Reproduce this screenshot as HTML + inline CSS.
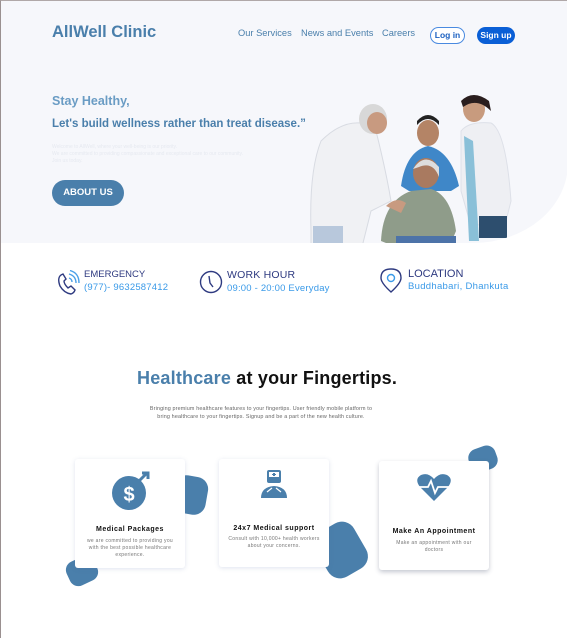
<!DOCTYPE html>
<html><head><meta charset="utf-8"><style>
*{margin:0;padding:0;box-sizing:border-box}
body{width:567px;height:638px;overflow:hidden;background:#fff;font-family:"Liberation Sans",sans-serif;position:relative;border-left:1px solid #9a9090;border-top:1px solid #b0a8a8}
.hero{position:absolute;left:0;top:0;width:567px;height:242px;background:#f6f7fb;border-bottom-right-radius:95px 80px;overflow:hidden}
.a{position:absolute;white-space:nowrap}
.nav{font-size:9.3px;color:#4a7fab;top:27px}
.btn{position:absolute;border-radius:10px;font-size:8.5px;font-weight:bold;text-align:center;line-height:17px;height:17px;top:26px}
.card{position:absolute;background:#fff;border-radius:3px;box-shadow:0 1px 5px rgba(80,100,160,.18);text-align:center}
.card h4{font-size:7px;letter-spacing:.5px;color:#111;position:absolute;left:0;right:0}
.card p{font-size:5px;color:#777;line-height:7px;position:absolute;left:8px;right:8px;letter-spacing:.3px}
.blob{position:absolute;background:#4a7fab;border-radius:9px}
</style></head><body>
<div class="hero">
<div class="a" style="left:51px;top:22px;font-size:16.5px;font-weight:bold;color:#4a7fab">AllWell Clinic</div>
<div class="a nav" style="left:237px">Our Services</div>
<div class="a nav" style="left:300px">News and Events</div>
<div class="a nav" style="left:381px">Careers</div>
<div class="btn" style="left:429px;width:35px;border:1px solid #4a8ae0;color:#1a5fc0;background:#fff;line-height:15px">Log in</div>
<div class="btn" style="left:476px;width:38px;background:#0a5fd6;color:#fff">Sign up</div>
<div class="a" style="left:51px;top:93px;font-size:12.5px;font-weight:bold;color:#6a9cc4">Stay Healthy,</div>
<div class="a" style="left:51px;top:117px;font-size:11.5px;font-weight:bold;color:#4a7fab">Let's build wellness rather than treat disease.”</div>
<div class="a" style="left:51px;top:143px;font-size:5px;color:#e6e9f0;line-height:7px">Welcome to AllWell, where your well-being is our priority.<br>We are committed to providing compassionate and exceptional care to our community.<br>Join us today.</div>
<div class="a" style="left:51px;top:179px;width:72px;height:26px;border-radius:13px;background:#4a7fab;color:#fff;font-size:9.5px;font-weight:bold;text-align:center;line-height:26px">ABOUT US</div>
<svg style="position:absolute;left:300px;top:90px" width="267" height="155">
<path d="M10 140 Q8 80 20 50 Q40 30 60 32 L75 40 Q85 80 90 110 L70 120 L60 160 L10 160Z" fill="#f0f1f4" stroke="#d8dbe2"/>
<ellipse cx="72" cy="28" rx="14" ry="15" fill="#d8d8d8"/><ellipse cx="76" cy="32" rx="10" ry="11" fill="#c89a80"/>
<rect x="12" y="135" width="30" height="20" fill="#b8c8dc"/>
<ellipse cx="127" cy="42" rx="11" ry="13" fill="#b48466"/><path d="M116 34 Q127 22 138 34 L138 30 Q127 18 116 30Z" fill="#222"/>
<path d="M100 95 Q105 60 127 55 Q150 60 158 95 L150 100 L108 100Z" fill="#3f87c8"/>
<path d="M80 150 Q82 110 110 100 L130 98 Q150 104 155 140 L150 152 L85 152Z" fill="#8f9c8a"/>
<ellipse cx="125" cy="82" rx="13" ry="15" fill="#a97a60"/><path d="M112 78 Q124 60 138 76 L138 86 Q132 70 118 76Z" fill="#ddd"/>
<rect x="95" y="145" width="60" height="10" fill="#4d73a8"/>
<path d="M85 115 Q95 105 105 112 L100 122 Z" fill="#c89a80"/>
<ellipse cx="173" cy="18" rx="11" ry="13" fill="#c89b7e"/><path d="M160 10 Q172 -2 188 10 L190 20 Q176 6 162 16Z" fill="#2a1e1e"/>
<path d="M160 40 Q168 30 190 32 Q205 40 210 110 L205 130 L170 135 L160 100Z" fill="#eeeff3" stroke="#dde0e8"/>
<path d="M163 45 L168 150 L178 150 L172 50Z" fill="#8ac0d8"/>
<rect x="178" y="125" width="28" height="22" fill="#2d4e6e"/>
</svg>
</div>
<svg style="position:absolute;left:55px;top:269px" width="24" height="26" fill="none" stroke="#2e3a80" stroke-width="1.4"><path d="M5 5 Q1 8 4 16 Q8 23 15 24 Q18 23 19 20 L15 16 L12 18 Q8 14 8 11 L10 9 L7 4Z"/><path d="M13 8 Q16 9 16 12M13 4 Q20 6 20 13M14 0.5 Q23 3 23 13" stroke="#4aa0e8"/></svg>
<div class="a" style="left:83px;top:268px;font-size:9.5px;color:#2e3a80">EMERGENCY</div>
<div class="a" style="left:83px;top:281px;font-size:9.5px;color:#3a9ae8;letter-spacing:.2px">(977)- 9632587412</div>
<svg style="position:absolute;left:198px;top:269px" width="24" height="24" fill="none" stroke="#2e3a80" stroke-width="1.4"><circle cx="12" cy="12" r="10.5"/><path d="M10 6 L11 13 L14 17"/></svg>
<div class="a" style="left:226px;top:268px;font-size:10.5px;color:#2e3a80;letter-spacing:.2px">WORK HOUR</div>
<div class="a" style="left:226px;top:282px;font-size:9.5px;color:#3a9ae8;letter-spacing:.2px">09:00 - 20:00 Everyday</div>
<svg style="position:absolute;left:378px;top:267px" width="24" height="26" fill="none" stroke="#2e3a80" stroke-width="1.4"><path d="M12 24 Q2 15 2 10 Q2 1 12 1 Q22 1 22 10 Q22 15 12 24Z"/><circle cx="12" cy="10" r="3.5" stroke="#3a9ae8"/></svg>
<div class="a" style="left:407px;top:267px;font-size:11px;color:#2e3a80">LOCATION</div>
<div class="a" style="left:407px;top:280px;font-size:9.5px;color:#3a9ae8;letter-spacing:.3px">Buddhabari, Dhankuta</div>
<div class="a" style="left:136px;top:367px;font-size:18px;font-weight:bold;color:#111;letter-spacing:.2px"><span style="color:#4a7fab">Healthcare</span> at your Fingertips.</div>
<div class="a" style="left:130px;top:404px;width:260px;text-align:center;font-size:5.4px;color:#666;line-height:8px;letter-spacing:.15px">Bringing premium healthcare features to your fingertips. User friendly mobile platform to<br>bring healthcare to your fingertips. Signup and be a part of the new health culture.</div>
<div class="blob" style="left:66px;top:557px;width:30px;height:26px;transform:rotate(-25deg)"></div>
<div class="blob" style="left:172px;top:475px;width:34px;height:38px;transform:rotate(10deg);border-radius:12px"></div>
<div class="blob" style="left:318px;top:523px;width:44px;height:52px;transform:rotate(-30deg);border-radius:14px"></div>
<div class="blob" style="left:468px;top:446px;width:28px;height:24px;transform:rotate(-20deg)"></div>
<div class="card" style="left:74px;top:458px;width:110px;height:109px">
<svg style="position:absolute;left:36px;top:12px" width="40" height="40"><circle cx="18" cy="22" r="17" fill="#4a7fab"/><text x="18" y="30" font-size="20" font-weight="bold" fill="#fff" text-anchor="middle" font-family="Liberation Sans">$</text><path d="M28 10 L36 2 M31 2 L37 2 L37 8" stroke="#4a7fab" stroke-width="3" fill="none"/></svg>
<h4 style="top:67px">Medical Packages</h4>
<p style="top:79px">we are committed to providing you with the best possible healthcare experience.</p></div>
<div class="card" style="left:218px;top:458px;width:110px;height:108px">
<svg style="position:absolute;left:41px;top:9px" width="28" height="32" fill="#4a7fab"><rect x="7" y="2" width="14" height="13" rx="2"/><rect x="9" y="4" width="10" height="5" fill="#fff"/><path d="M13 5h2v3h-2zM12 6h4v1h-4z" fill="#4a7fab"/><path d="M1 30 Q1 19 14 18 Q27 19 27 30Z"/><path d="M7 24 L12 20 M21 24 L16 20" stroke="#fff" stroke-width="1.2"/></svg>
<h4 style="top:66px">24x7 Medical support</h4>
<p style="top:77px">Consult with 10,000+ health workers about your concerns.</p></div>
<div class="card" style="left:378px;top:460px;width:110px;height:109px;box-shadow:0 2px 5px rgba(60,70,100,.3)">
<svg style="position:absolute;left:37px;top:12px" width="36" height="30"><path d="M18 28 L4 14 Q-2 6 5 2 Q12 -1 18 6 Q24 -1 31 2 Q38 6 32 14Z" fill="#4a7fab"/><path d="M0 14 H12 L15 8 L19 20 L22 14 H36" stroke="#fff" stroke-width="1.8" fill="none"/></svg>
<h4 style="top:67px">Make An Appointment</h4>
<p style="top:79px">Make an appointment with our doctors</p></div>
</body></html>
